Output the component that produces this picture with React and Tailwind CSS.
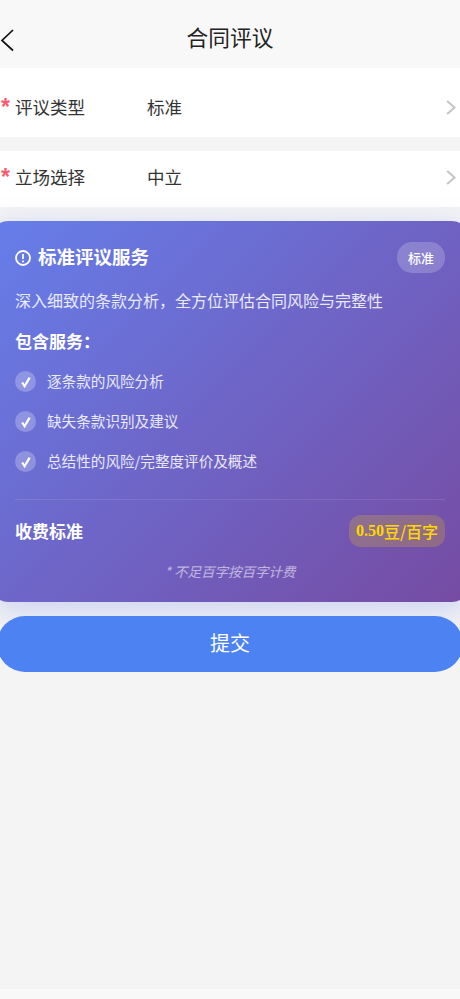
const cjk = "font-['Noto_Sans_CJK_SC','Liberation_Sans',sans-serif]";

const FormRow = ({ label, value, className }) => (
  <div className={`flex items-center bg-white ${className}`}>
    <span className="w-[15px] pl-px text-[23px] font-bold leading-none font-['Liberation_Sans',sans-serif] text-[#fb5a70]">*</span>
    <span className="w-[132px] text-[17.5px] text-[#333]">{label}</span>
    <span className="text-[17.5px] text-[#333]">{value}</span>
    <svg className="ml-auto mr-[4px]" width="10" height="15" viewBox="0 0 10 15" fill="none">
      <path d="M1.2 1 8.5 7.5 1.2 14" stroke="#c4c4c4" strokeWidth="2" />
    </svg>
  </div>
);

const services = ["逐条款的风险分析", "缺失条款识别及建议", "总结性的风险/完整度评价及概述"];

export default function App() {
  return (
    <div className={`flex min-h-[999px] w-[460px] flex-col overflow-hidden bg-[#f4f4f4] ${cjk}`}>
      <header className="relative flex h-[68px] items-center justify-center bg-[#f8f8f8]">
        <svg className="absolute left-0 top-[29px]" width="14" height="23" viewBox="0 0 14 23" fill="none">
          <path d="M13 1 2 11.5l11 10" stroke="#111" strokeWidth="1.7" />
        </svg>
        <h1 className="pt-[10px] text-[21.7px] leading-none text-[#222] -translate-y-[2px]">合同评议</h1>
      </header>

      <FormRow label="评议类型" value="标准" className="h-[69px] pt-[10px]" />
      <FormRow label="立场选择" value="中立" className="mt-[14px] h-[56px] pb-[4px]" />

      <section className="relative -mx-[8px] mt-[14px] h-[381px] rounded-[16px] bg-[linear-gradient(135deg,#667eea,#764ba2)] px-[23px] pt-[21px] text-white shadow-[0_8px_32px_rgba(102,126,234,0.3)]">
        <div className="flex items-center justify-between">
          <div className="flex items-center gap-[7px]">
            <svg width="16" height="16" viewBox="0 0 16 16" fill="none" stroke="white">
              <circle cx="8" cy="8" r="7" strokeWidth="1.8" />
              <path d="M8 4v5M8 10.6v1.6" strokeWidth="1.8" />
            </svg>
            <h2 className="-translate-y-px text-[18.5px] font-bold leading-none">标准评议服务</h2>
          </div>
          <span className="flex h-[31px] w-[48px] items-center justify-center rounded-[15px] bg-white/20 text-[13px] font-medium">标准</span>
        </div>

        <p className="mt-[15px] text-[16px] leading-[24px] text-white/85">深入细致的条款分析，全方位评估合同风险与完整性</p>
        <h3 className="mt-[17px] text-[17px] font-bold leading-[24px]">包含服务：</h3>

        <ul className="mt-[18px] flex flex-col gap-[19px]">
          {services.map((item) => (
            <li key={item} className="flex h-[21px] items-center gap-[11px]">
              <span className="flex size-[21px] items-center justify-center rounded-full bg-white/25">
                <svg width="12" height="12" viewBox="0 0 12 12" fill="none">
                  <path d="M2.2 6.5 4.6 10.2 9.6 1.6" stroke="white" strokeWidth="2.2" />
                </svg>
              </span>
              <span className="pb-[2px] text-[14.6px] text-white/85">{item}</span>
            </li>
          ))}
        </ul>

        <div className="mt-[27px] flex h-[62px] items-center justify-between border-t border-white/10 pt-[1px]">
          <span className="text-[17px] font-bold">收费标准</span>
          <span className="flex h-[32px] w-[96px] items-center justify-center rounded-[12px] bg-[#ffd700]/20 text-[16px] font-bold text-[#ffd700] font-['Liberation_Serif','Noto_Sans_CJK_SC',serif]">
            0.50<span className={`font-medium ${cjk}`}>豆/百字</span>
          </span>
        </div>

        <p className="text-center text-[13.5px] italic leading-[20px] text-white/55">* 不足百字按百字计费</p>
      </section>

      <button className="relative -mx-[3px] mt-[14px] h-[56px] rounded-[28px] bg-[#4c82f2] pb-[2px] text-[20px] text-white">提交</button>

      <div className="mt-auto h-[10px] bg-[#f8f8f8]" />
    </div>
  );
}
